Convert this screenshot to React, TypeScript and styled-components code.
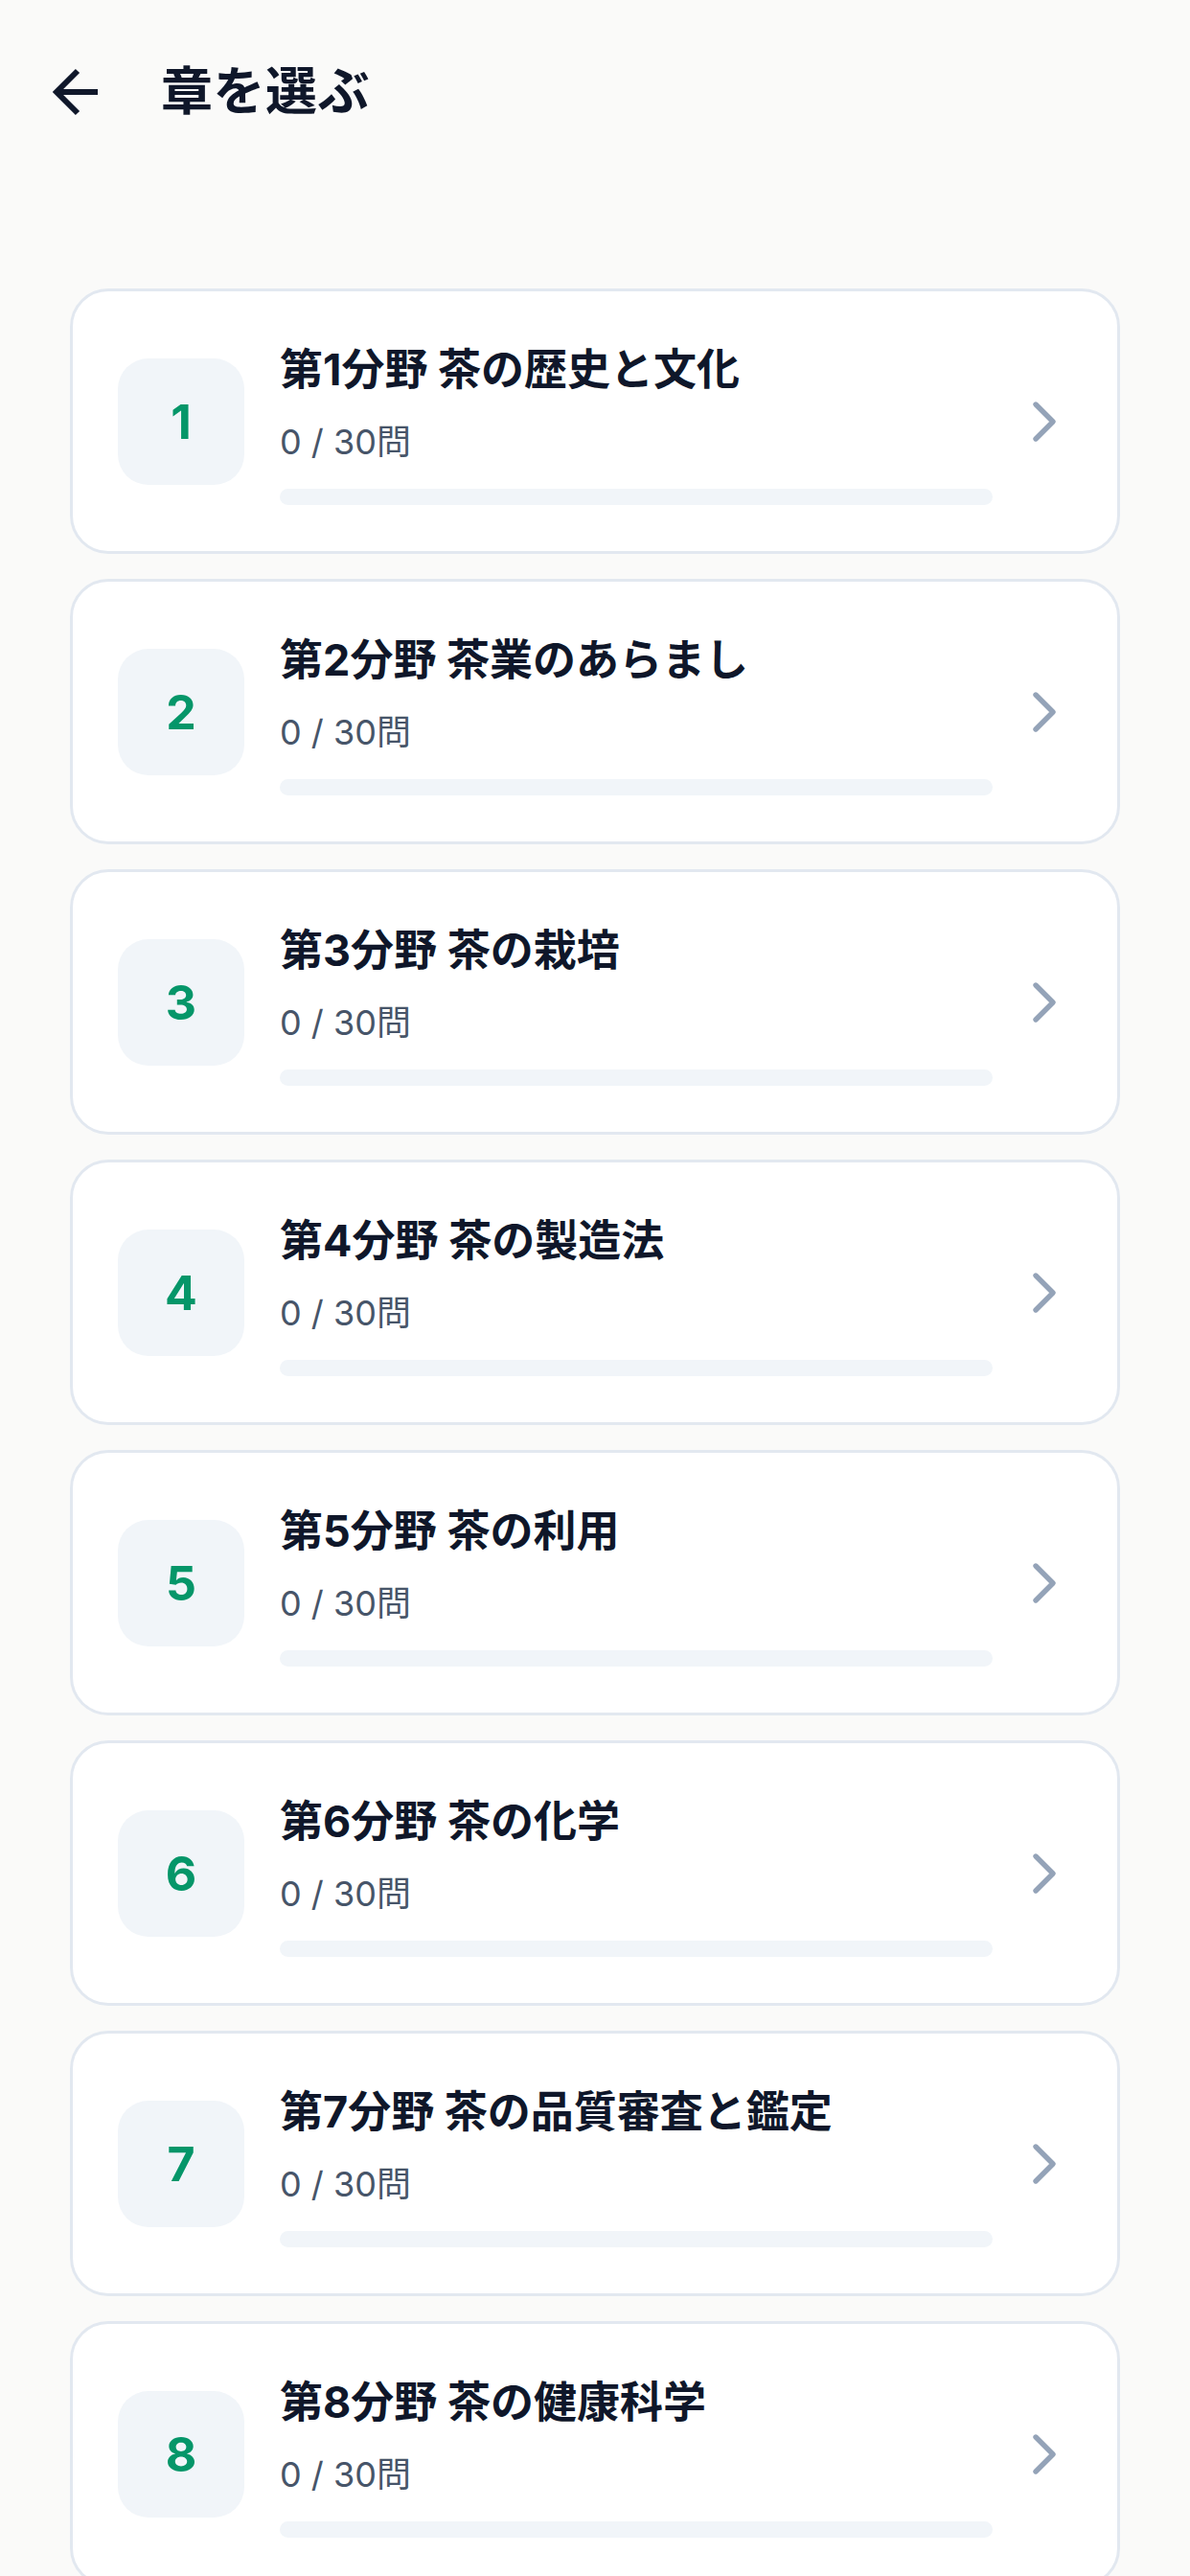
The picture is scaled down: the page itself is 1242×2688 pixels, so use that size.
import React from 'react';
import styled, { createGlobalStyle } from 'styled-components';

const GlobalStyle = createGlobalStyle`
  html, body {
    margin: 0;
    padding: 0;
    background: #fafaf9;
  }
  body {
    font-family: Inter, "Noto Sans CJK JP", sans-serif;
    color: #0f172a;
  }
`;

const Page = styled.div`
  min-height: 2688px;
  background: #fafaf9;
`;

const Header = styled.header`
  height: 192px;
  display: flex;
  align-items: center;
  padding-left: 52px;
  gap: 64px;
`;

const BackButton = styled.button`
  width: 52px;
  height: 52px;
  padding: 0;
  border: none;
  background: none;
  color: #0f172a;
  display: flex;
`;

const Title = styled.h1`
  margin: 0;
  font-size: 54px;
  font-weight: 700;
  line-height: 1;
  letter-spacing: 0.5px;
`;

const List = styled.div`
  display: flex;
  flex-direction: column;
  gap: 26px;
  padding: 109px 73px 0 73px;
`;

const Card = styled.div`
  display: flex;
  align-items: center;
  height: 277px;
  box-sizing: border-box;
  padding: 0 40px 0 47px;
  background: #ffffff;
  border: 3px solid #e2e8f0;
  border-radius: 40px;
`;

const Badge = styled.div`
  flex: none;
  width: 132px;
  height: 132px;
  border-radius: 32px;
  background: #f1f5f9;
  display: flex;
  align-items: center;
  justify-content: center;
  color: #059669;
  font-size: 50px;
  font-weight: 700;
`;

const Body = styled.div`
  flex: 1;
  margin-left: 37px;
  display: flex;
  flex-direction: column;
  padding-top: 4px;
`;

const ChapterName = styled.div`
  font-size: 45px;
  font-weight: 700;
  line-height: 57px;
  color: #0f172a;
`;

const Count = styled.div`
  margin-top: 24px;
  font-size: 36px;
  font-weight: 400;
  line-height: 47px;
  color: #475569;
`;

const Track = styled.div`
  margin-top: 25px;
  height: 17px;
  border-radius: 9px;
  background: #f1f5f9;
  overflow: hidden;
`;

const Fill = styled.div`
  height: 100%;
  background: #059669;
`;

const Chevron = styled.div`
  flex: none;
  width: 72px;
  height: 72px;
  margin-left: 18px;
  color: #94a3b8;
`;

const chapters = [
  '茶の歴史と文化',
  '茶業のあらまし',
  '茶の栽培',
  '茶の製造法',
  '茶の利用',
  '茶の化学',
  '茶の品質審査と鑑定',
  '茶の健康科学',
];

const App: React.FC = () => {
  return (
    <Page>
      <GlobalStyle />
      <Header>
        <BackButton aria-label="back">
          <svg width="52" height="52" viewBox="0 0 52 52" fill="none" stroke="currentColor" strokeWidth="6">
            <path d="M50 26H7" strokeLinecap="butt" />
            <path d="M29 4L7 26l22 22" strokeLinecap="butt" strokeLinejoin="miter" />
          </svg>
        </BackButton>
        <Title>章を選ぶ</Title>
      </Header>
      <List>
        {chapters.map((name, index) => {
          const done = 0;
          const total = 30;
          return (
            <Card key={index}>
              <Badge>{index + 1}</Badge>
              <Body>
                <ChapterName>第{index + 1}分野 {name}</ChapterName>
                <Count>{done} / {total}問</Count>
                <Track>
                  <Fill style={{ width: `${(done / total) * 100}%` }} />
                </Track>
              </Body>
              <Chevron>
                <svg width="72" height="72" viewBox="0 0 24 24" fill="none" stroke="currentColor" strokeWidth="1.8" strokeLinecap="round" strokeLinejoin="round">
                  <path d="m9 18 6-6-6-6" />
                </svg>
              </Chevron>
            </Card>
          );
        })}
      </List>
    </Page>
  );
};

export default App;
